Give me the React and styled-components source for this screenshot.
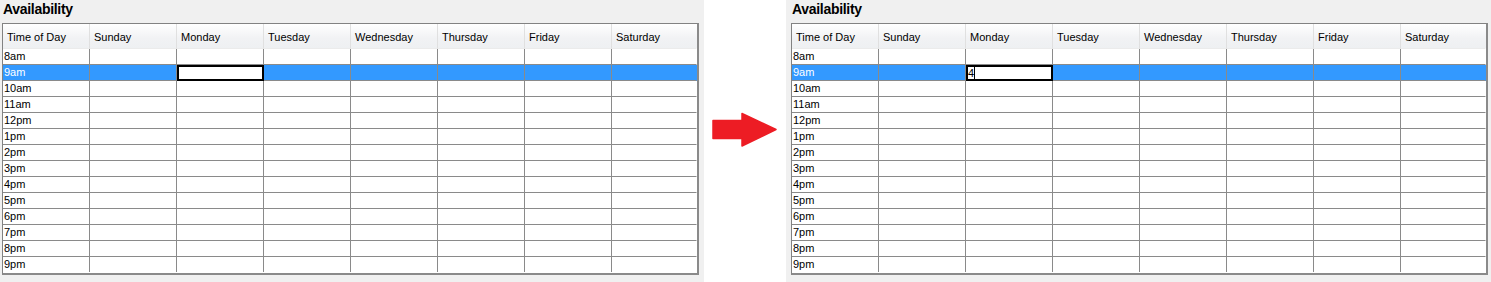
import styled, { createGlobalStyle } from "styled-components";

const GlobalStyle = createGlobalStyle`
    body{
        margin: 0;
        background: #ffffff;
    }
    *{
        box-sizing: border-box;
    }
`;

const times = ["8am","9am","10am","11am","12pm","1pm","2pm","3pm","4pm","5pm","6pm","7pm","8pm","9pm"];
const days = ["Sunday","Monday","Tuesday","Wednesday","Thursday","Friday","Saturday"];

function Schedule(props){
    return(
        <Panel $pad={props.pad}>
            <Title>Availability</Title>
            <Grid>
                <HeadCell>Time of Day</HeadCell>
                {days.map(d => <HeadCell key={d} $last={d === "Saturday"}>{d}</HeadCell>)}
                {times.map((t, r) => {
                    const selected = t === "9am";
                    const lastRow = r === times.length - 1;
                    return [
                        <Cell key={t} $selected={selected} $lastRow={lastRow}>{t}</Cell>,
                        ...days.map(d => (
                            selected && d === "Monday"
                                ? <Editor key={t + d}>
                                    {props.value}{props.caret && <Caret/>}
                                  </Editor>
                                : <Cell key={t + d} $selected={selected} $lastRow={lastRow} $last={d === "Saturday"}/>
                        ))
                    ];
                })}
            </Grid>
        </Panel>
    );
}

export default function App(){
    return(
        <Page>
            <GlobalStyle/>
            <Schedule pad={2} value=""/>
            <ArrowSlot>
                <svg width="66" height="36" viewBox="0 0 66 36">
                    <polygon
                        points="1,8.5 30,8.5 30,1.5 64,17.5 30,34 30,26.5 1,26.5"
                        fill="#ed1c24"
                        stroke="#ed1c24"
                        strokeWidth="1.5"
                        strokeLinejoin="round"
                    />
                </svg>
            </ArrowSlot>
            <Schedule pad={5} value="4" caret/>
        </Page>
    );
}

const Page = styled.div`
    display: flex;
    width: 1491px;
    height: 282px;
    font-family: "Liberation Sans", Arial, sans-serif;
`;

const Panel = styled.div`
    width: ${p => p.$pad === 2 ? "704px" : "705px"};
    height: 282px;
    background: #f0f0f0;
    padding-left: ${p => p.$pad}px;
`;

const Title = styled.div`
    height: 18px;
    line-height: 18px;
    margin: 0 0 5px 1px;
    font-size: 14px;
    font-weight: bold;
    letter-spacing: -0.3px;
    color: #000;
`;

const Grid = styled.div`
    width: 697px;
    display: grid;
    grid-template-columns: repeat(7, 87px) 1fr;
    grid-auto-rows: 16px;
    grid-template-rows: 25px;
    background: #ffffff;
    border-top: 1px solid #828282;
    border-left: 1px solid #828282;
    border-right: 2px solid #8a8a8a;
    border-bottom: 2px solid #8a8a8a;
    font-size: 11px;
`;

const HeadCell = styled.div`
    height: 25px;
    padding: 2px 0 0 4px;
    line-height: 22px;
    color: #000;
    background: linear-gradient(#ffffff, #f1f2f4 60%, #eef0f2);
    border-right: 1px solid ${p => p.$last ? "transparent" : "#e0e0e0"};
    border-bottom: 1px solid #ebebeb;
    white-space: nowrap;
`;

const Cell = styled.div`
    height: ${p => p.$lastRow ? "15px" : "16px"};
    padding-left: 1px;
    line-height: 15px;
    color: ${p => p.$selected ? "#ffffff" : "#000000"};
    background: ${p => p.$selected ? "#3399ff" : "#ffffff"};
    border-right: 1px solid ${p => p.$last ? "transparent" : "#8a8a8a"};
    border-bottom: ${p => p.$lastRow ? "none" : "1px solid #8a8a8a"};
`;

const Editor = styled.div`
    height: 16px;
    display: flex;
    align-items: center;
    background: #ffffff;
    border: 2px solid #000000;
    line-height: 12px;
    color: #000;
    font-size: 11px;
    span:first-child{
        margin-left: 0;
    }
`;

const Caret = styled.span`
    display: inline-block;
    width: 1px;
    height: 12px;
    background: #000;
    margin-left: 0;
`;

const ArrowSlot = styled.div`
    width: 82px;
    height: 282px;
    padding: 112px 0 0 8px;
    background: #ffffff;
`;
